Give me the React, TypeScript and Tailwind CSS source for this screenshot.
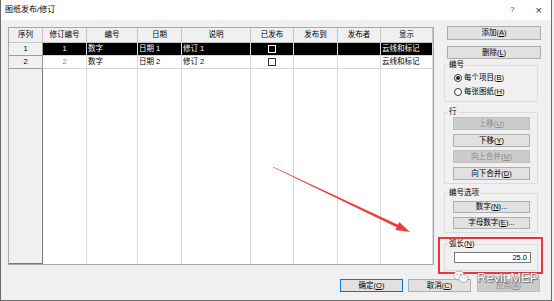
import React from "react";

const FONT = "font-['Liberation_Sans','Noto_Sans_CJK_SC',sans-serif]";

type Row = { n: string; rev: string; num: string; date: string; desc: string; show: string; selected?: boolean };

const ROWS: Row[] = [
  { n: "1", rev: "1", num: "数字", date: "日期 1", desc: "修订 1", show: "云线和标记", selected: true },
  { n: "2", rev: "2", num: "数字", date: "日期 2", desc: "修订 2", show: "云线和标记" },
];

const HEADERS = ["序列", "修订编号", "编号", "日期", "说明", "已发布", "发布到", "发布者", "显示"];

function Key({ k }: { k: string }) {
  return (
    <>
      (<span className="underline">{k}</span>)
    </>
  );
}

function Btn({
  children,
  disabled,
  focused,
  className = "",
}: {
  children: React.ReactNode;
  disabled?: boolean;
  focused?: boolean;
  className?: string;
}) {
  return (
    <div
      className={
        "flex items-center justify-center border text-[7.5px] leading-none " +
        (disabled
          ? "bg-[#cccccc] border-[#bfbfbf] text-[#8a8a8a] "
          : focused
          ? "bg-[#e1e1e1] border-[#0078d7] text-black "
          : "bg-[#e1e1e1] border-[#adadad] text-black ") +
        className
      }
    >
      {children}
    </div>
  );
}

function Radio({ checked, children }: { checked?: boolean; children: React.ReactNode }) {
  return (
    <div className="flex items-center h-[10px] gap-[2px] text-[7.5px] leading-none">
      <div className="w-[8px] h-[8px] rounded-full border border-[#333] bg-white flex items-center justify-center">
        {checked && <div className="w-[4px] h-[4px] rounded-full bg-[#222]" />}
      </div>
      <span>{children}</span>
    </div>
  );
}

function Checkbox({ dark }: { dark?: boolean }) {
  return (
    <div
      className={
        "w-[8px] h-[8px] border " + (dark ? "border-white bg-black" : "border-[#333] bg-white")
      }
    />
  );
}

function Group({
  label,
  className = "",
  children,
}: {
  label: React.ReactNode;
  className?: string;
  children: React.ReactNode;
}) {
  return (
    <fieldset className={"border border-[#dcdcdc] w-[94px] " + className}>
      <legend className="ml-[3px] px-[1px] text-[7.5px] leading-[10px]">{label}</legend>
      {children}
    </fieldset>
  );
}

export default function App() {
  const gridCols = "grid grid-cols-[34px_44px_51px_44px_69px_43px_44px_43px_52px]";
  return (
    <div className={"relative w-[554px] h-[301px] bg-[#f0f0f0] text-black " + FONT}>
      <div className="w-[552px] h-[301px] border-l border-r border-b border-[#6a6a6a] flex flex-col">
        {/* title bar */}
        <div className="h-[20px] bg-white flex items-center pl-[4px] pr-[9px] text-[8px]">
          <span>图纸发布/修订</span>
          <span className="ml-auto text-[8px] text-[#444]">?</span>
          <span className="ml-[21px] text-[11px] leading-none text-[#333]">×</span>
        </div>

        <div className="flex h-[255px]">
          {/* table */}
          <div className="pl-[7px] pt-[7px]">
            <div className="w-[426px] h-[238px] border border-[#a8a8a8] bg-white flex flex-col text-[7.5px] leading-none">
              <div className={gridCols + " h-[15px]"}>
                {HEADERS.map((h) => (
                  <div
                    key={h}
                    className="bg-[#f0f0f0] border-r border-b border-[#c4c4c4] flex items-center justify-center"
                  >
                    {h}
                  </div>
                ))}
              </div>
              {ROWS.map((r) => {
                const cell = r.selected
                  ? "bg-black text-white border-r border-b border-[#d8d8d8]"
                  : "bg-white border-r border-b border-[#d8d8d8]";
                return (
                  <div key={r.n} className={gridCols + " h-[13px]"}>
                    <div className="bg-[#f0f0f0] border-r border-b border-[#9a9a9a] flex items-center justify-center">
                      {r.n}
                    </div>
                    <div className={cell + " flex items-center justify-center text-[#7f7f7f]"}>{r.rev}</div>
                    <div className={cell + " flex items-center pl-[1px]"}>{r.num}</div>
                    <div className={cell + " flex items-center pl-[1px]"}>{r.date}</div>
                    <div className={cell + " flex items-center pl-[1px]"}>{r.desc}</div>
                    <div className={cell + " flex items-center justify-center"}>
                      <Checkbox dark={r.selected} />
                    </div>
                    <div className={cell} />
                    <div className={cell} />
                    <div className={cell + " flex items-center pl-[1px]"}>{r.show}</div>
                  </div>
                );
              })}
              <div className={gridCols + " flex-1"}>
                <div className="bg-[#f0f0f0] border-r border-b border-[#7a7a7a]" />
                {HEADERS.slice(1).map((h) => (
                  <div key={h} className="border-r border-[#d8d8d8]" />
                ))}
              </div>
            </div>
          </div>

          {/* right panel */}
          <div className="ml-[4px] w-[109px] flex flex-col">
            <Btn className="ml-[9px] mt-[6px] w-[94px] h-[14px]">
              添加<Key k="A" />
            </Btn>
            <Btn className="ml-[9px] mt-[6px] w-[94px] h-[13px]">
              删除<Key k="L" />
            </Btn>

            <Group label="编号" className="ml-[6px] mt-[1px] h-[42px]">
              <div className="pl-[9px] pt-[3px] flex flex-col gap-[4px]">
                <Radio checked>
                  每个项目<Key k="B" />
                </Radio>
                <Radio>
                  每张图纸<Key k="H" />
                </Radio>
              </div>
            </Group>

            <Group label="行" className="ml-[6px] mt-[5px] h-[77px]">
              <div className="pl-[8px] flex flex-col">
                <Btn disabled className="w-[77px] h-[13px]">
                  上移<Key k="U" />
                </Btn>
                <Btn className="w-[77px] h-[13px] mt-[4px]">
                  下移<Key k="Y" />
                </Btn>
                <Btn disabled className="w-[77px] h-[13px] mt-[3px]">
                  向上合并<Key k="M" />
                </Btn>
                <Btn className="w-[77px] h-[13px] mt-[4px]">
                  向下合并<Key k="D" />
                </Btn>
              </div>
            </Group>

            <Group label="编号选项" className="ml-[6px] mt-[4px] h-[45px]">
              <div className="pl-[8px] pt-[3px] flex flex-col">
                <Btn className="w-[77px] h-[12px]">
                  数字<Key k="N" />...
                </Btn>
                <Btn className="w-[77px] h-[12px] mt-[4px]">
                  字母数字<Key k="E" />...
                </Btn>
              </div>
            </Group>

            <div className="mt-[4px] w-[105px] h-[37px] border-2 border-[#e8383d] pl-[4px]">
              <Group label={<>弧长<Key k="N" /></>} className="h-[32px]">
                <div className="pl-[9px] pt-[3px]">
                  <div className="w-[77px] h-[11px] bg-white border border-[#7a7a7a] flex items-center justify-end pr-[3px] text-[7.5px] leading-none">
                    25.0
                  </div>
                </div>
              </Group>
            </div>
          </div>
        </div>

        {/* bottom buttons */}
        <div className="mt-[4px] flex justify-end gap-[5px] pr-[11px]">
          <Btn focused className="w-[63px] h-[13px]">
            确定<Key k="O" />
          </Btn>
          <Btn className="w-[63px] h-[13px]">
            取消<Key k="C" />
          </Btn>
          <Btn disabled className="w-[63px] h-[13px] ml-[1px]">
            应用<Key k="A" />
          </Btn>
        </div>
      </div>

      {/* red annotation arrow */}
      <svg className="absolute left-0 top-0 pointer-events-none" width="554" height="301">
        <polygon
          points="272.87,167.27 273.13,166.73 397.94,224.64 399.23,221.93 410,232 395.37,230.07 396.66,227.36"
          fill="#ef3b3b"
        />
      </svg>

      {/* watermark */}
      <div className="absolute left-[453px] top-[270px] flex items-center gap-[8px] pointer-events-none">
        <svg width="16" height="14" viewBox="0 0 16 14">
          <ellipse cx="6" cy="5.5" rx="5.2" ry="4.5" fill="white" stroke="#9a9a9a" strokeWidth="0.8" />
          <ellipse cx="10.5" cy="8.5" rx="4.5" ry="3.8" fill="white" stroke="#9a9a9a" strokeWidth="0.8" />
          <circle cx="4.3" cy="4.5" r="0.7" fill="#888" />
          <circle cx="7.7" cy="4.5" r="0.7" fill="#888" />
          <circle cx="9.2" cy="8" r="0.6" fill="#888" />
          <circle cx="12" cy="8" r="0.6" fill="#888" />
        </svg>
        <span className="font-['Liberation_Sans',sans-serif] text-[13px] leading-none text-white [text-shadow:0_0_1px_#555,0_0_1px_#555,1px_1px_1px_#777]">
          Revit MEP
        </span>
      </div>
    </div>
  );
}
